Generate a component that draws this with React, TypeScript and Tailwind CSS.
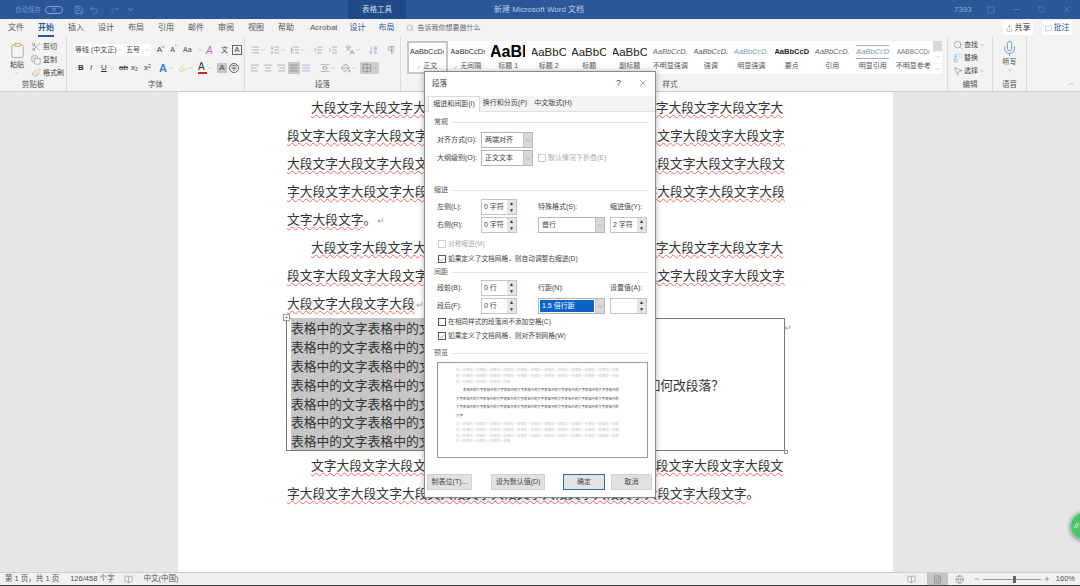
import React from "react";
import {
  Scissors, Copy, Paintbrush, Clipboard, List, ListOrdered, ListTree, Indent, Outdent,
  AlignLeft, AlignCenter, AlignRight, AlignJustify, AlignVerticalSpaceAround, ArrowDownAZ, Pilcrow, Search, Replace,
  MousePointer2, Mic, Share, MessageSquare, ChevronDown, ChevronUp, Minus, Square, X, Save, Undo2, Redo2,
  Highlighter, PaintBucket, Grid2x2, Check, BookOpen, FileText, Globe, Plus, Languages,
} from "lucide-react";

const P = "大段文字";
const pat = (start: number, n: number) => {
  let s = "";
  for (let i = 0; i < n; i++) s += P[(start + i) % 4];
  return s;
};
const Mark = () => <span className="text-[9px] text-gray-400 ml-[1px]">↵</span>;
const Wavy = ({ children }: { children: React.ReactNode }) => (
  <span className="underline decoration-wavy decoration-red-400 decoration-1 underline-offset-2">{children}</span>
);
const Line = ({ children, indent }: { children: React.ReactNode; indent?: boolean }) => (
  <div className={`h-[28px] leading-[28px] whitespace-nowrap ${indent ? "pl-[24px]" : ""}`}>{children}</div>
);

const tabs: string[] = ["文件", "开始", "插入", "设计", "布局", "引用", "邮件", "审阅", "视图", "帮助"];

const styles: [string, string, string][] = [
  ["AaBbCcDı", "⸝ 正文", "text-[7.5px] text-[#333]"],
  ["AaBbCcDı", "⸝ 无间隔", "text-[7.5px] text-[#333]"],
  ["AaBl", "标题 1", "text-[16px] font-bold text-black"],
  ["AaBbC", "标题 2", "text-[11.5px] text-[#222]"],
  ["AaBbC", "标题", "text-[11.5px] text-[#222]"],
  ["AaBbC", "副标题", "text-[11.5px] font-medium text-[#222]"],
  ["AaBbCcD.", "不明显强调", "text-[7.5px] italic text-[#666]"],
  ["AaBbCcD.", "强调", "text-[7.5px] italic text-[#555]"],
  ["AaBbCcD.", "明显强调", "text-[7.5px] italic text-[#7d9bb5]"],
  ["AaBbCcD", "要点", "text-[7.5px] font-bold text-[#222]"],
  ["AaBbCcD.", "引用", "text-[7.5px] italic text-[#666]"],
  ["AaBbCcD", "明显引用", "text-[7.5px] italic text-[#7d9bb5] border-y border-[#9db4c8]"],
  ["AABBCCDı", "不明显参考", "text-[6.5px] text-[#777]"],
];

const G = ({ w, label, children, labelClass }: { w: string; label: string; children: React.ReactNode; labelClass?: string }) => (
  <div className={`${w} h-full flex flex-col border-r border-[#dcdcdc] shrink-0`}>
    <div className="h-[42px] overflow-hidden">{children}</div>
    <div className={`h-[12px] leading-[12px] text-[7.5px] text-[#555] text-center ${labelClass ?? ""}`}>{label}</div>
  </div>
);

const Ic = { size: 10, strokeWidth: 1, className: "text-[#555] shrink-0" };
const Dn = () => <ChevronDown size={6} strokeWidth={1.2} className="text-[#666] shrink-0" />;

const Sel = ({ w, text, hl }: { w: string; text: string; hl?: boolean }) => (
  <div className={`${w} h-[16px] flex border border-[#b5b5b5] bg-white shrink-0`}>
    <div className="flex-1 p-[1px] min-w-0">
      <div className={`h-full pl-[2px] leading-[12px] whitespace-nowrap ${hl ? "bg-[#0a64c8] text-white" : ""}`}>{text}</div>
    </div>
    <div className="w-[9px] bg-[#d8d8d8] flex items-center justify-center border-l border-[#c4c4c4]">
      <ChevronDown size={7} strokeWidth={1.2} className="text-[#555]" />
    </div>
  </div>
);
const Spin = ({ w, text }: { w: string; text: string }) => (
  <div className={`${w} h-[16px] flex border border-[#c4c4c4] bg-white shrink-0`}>
    <div className="flex-1 pl-[2px] leading-[13px] whitespace-nowrap">{text}</div>
    <div className="w-[9px] flex flex-col gap-[1px] bg-[#e4e4e4] text-[#333]">
      <div className="flex-1 flex items-center justify-center text-[5px] leading-none">▲</div>
      <div className="flex-1 flex items-center justify-center text-[5px] leading-none">▼</div>
    </div>
  </div>
);
const Heading = ({ t, cls }: { t: string; cls: string }) => (
  <div className={`${cls} flex items-center gap-[4px] pl-[9px] pr-[7px] h-[14px]`}>
    <span className="shrink-0 text-[#555]">{t}</span>
    <div className="flex-1 h-px bg-[#e2e2e2]" />
  </div>
);
const Cb = ({ checked, disabled, text, cls }: { checked?: boolean; disabled?: boolean; text: string; cls: string }) => (
  <div className={`${cls} h-[14px] pl-[13px] flex items-center gap-[2px] text-[6.7px] ${disabled ? "text-[#aaa]" : ""}`}>
    <div className={`w-[8px] h-[8px] border flex items-center justify-center bg-white ${disabled ? "border-[#ccc]" : "border-[#555]"}`}>
      {checked && <Check size={7} strokeWidth={1.4} className="text-[#333]" />}
    </div>
    <span className="whitespace-nowrap">{text}</span>
  </div>
);
const Btn = ({ w, text, primary, cls }: { w: string; text: string; primary?: boolean; cls?: string }) => (
  <div className={`${w} h-[16px] leading-[14px] text-center whitespace-nowrap border ${primary ? "border-[#2a6ea8] border-[1.5px] bg-[#e4e4e4]" : "border-[#d0d0d0] bg-[#e1e1e1]"} ${cls ?? ""}`}>{text}</div>
);
const Lab = ({ w, t }: { w: string; t: string }) => <span className={`${w} shrink-0 whitespace-nowrap`}>{t}</span>;
const repeat = (s: string, n: number) => Array(n).fill(s).join("");

export default function App() {
  return (
    <div className="relative w-[1080px] h-[586px] overflow-hidden flex flex-col bg-[#e6e6e6] text-[8px] text-[#444]" style={{ fontFamily: '"Liberation Sans", "Noto Sans CJK SC", sans-serif' }}>
      {/* title bar */}
      <div className="h-[19px] shrink-0 bg-[#2b579a] flex items-center text-[#6f94c6] relative">
        <span className="ml-[15px] w-[26px] whitespace-nowrap text-[6.5px]">自动保存</span>
        <div className="ml-[4px] w-[18px] h-[8px] rounded-full border border-[#7fa2d0] flex items-center justify-center text-[5px]">关</div>
        <Save size={10} strokeWidth={1} className="ml-[11px] text-[#a8c0e0]" />
        <Undo2 size={10} strokeWidth={1} className="ml-[5px] text-[#a8c0e0]" />
        <Dn />
        <Redo2 size={10} strokeWidth={1} className="ml-[5px] text-[#6f92c2]" />
        <ChevronDown size={7} className="ml-[7px] text-[#a8c0e0]" />
        <div className="ml-[214px] w-[58px] h-full bg-[#1f4a86] text-[#cfdcef] flex items-center justify-center text-[7.5px]">表格工具</div>
        <div className="ml-[88px] text-[#b9cce6] whitespace-nowrap">新建 Microsoft Word 文档</div>
        <div className="ml-auto flex items-center text-[#8fb0da]">
          <span className="w-[24px]">7393</span>
          <Square size={8} strokeWidth={1} className="ml-[9px]" />
          <Minus size={9} strokeWidth={1} className="ml-[17px]" />
          <Square size={7} strokeWidth={1} className="ml-[17px]" />
          <X size={9} strokeWidth={1} className="ml-[17px] mr-[9px]" />
        </div>
      </div>
      {/* tabs */}
      <div className="h-[18px] shrink-0 bg-[#f3f3f3] flex items-center relative">
        <div className="flex pl-[8px] gap-[14px]">
          {tabs.map((t, i) => (
            <div key={i} className={`relative w-[16px] whitespace-nowrap ${i === 1 ? "font-bold text-[#2b579a]" : "text-[#555]"}`}>
              {t}
              {i === 1 && <div className="absolute left-0 right-0 top-[13px] h-[1.5px] bg-[#2b579a]" />}
            </div>
          ))}
        </div>
        <span className="ml-[16px] text-[#555]">Acrobat</span>
        <span className="ml-[12px] text-[#2b579a]">设计</span>
        <span className="ml-[13px] text-[#2b579a]">布局</span>
        <Search size={8} strokeWidth={1} className="ml-[11px] text-[#555]" />
        <span className="ml-[4px] text-[#666] whitespace-nowrap text-[7px]">告诉我你想要做什么</span>
        <div className="ml-auto flex items-center gap-[9px] mr-[8px]">
          <div className="w-[30px] h-[14px] bg-white flex items-center justify-center gap-[2px] text-[#333]"><Share size={7} strokeWidth={1} />共享</div>
          <div className="w-[30px] h-[14px] bg-white flex items-center justify-center gap-[2px] text-[#2b579a]"><MessageSquare size={7} strokeWidth={1} />批注</div>
        </div>
      </div>
      {/* ribbon */}
      <div className="h-[55px] shrink-0 bg-[#f3f3f3] flex border-b border-[#cfcfcf] relative">
        <G w="w-[67px]" label="剪贴板">
          <div className="flex pl-[9px] pt-[5px] text-[7px]">
            <div className="w-[16px] flex flex-col items-center">
              <Clipboard size={17} strokeWidth={1} className="text-[#b58a4a]" />
              <span className="mt-[1px] whitespace-nowrap leading-[10px]">粘贴</span>
              <Dn />
            </div>
            <div className="ml-[6px] flex flex-col gap-[3px] leading-[10px] whitespace-nowrap">
              <div className="flex items-center gap-[2px]"><Scissors {...Ic} />剪切</div>
              <div className="flex items-center gap-[2px]"><Copy {...Ic} />复制</div>
              <div className="flex items-center gap-[2px]"><Paintbrush size={10} strokeWidth={1} className="text-[#b58a4a]" />格式刷</div>
            </div>
          </div>
        </G>
        <G w="w-[178px]" label="字体">
          <div className="pl-[7px] pt-[7px] flex flex-col gap-[6px]">
            <div className="flex items-center h-[12px] text-[7px]">
              <div className="w-[50px] h-[12px] bg-white flex items-center pl-[1px] whitespace-nowrap">等线 (中文正)<Dn /></div>
              <div className="ml-[1px] w-[26px] h-[12px] bg-white flex items-center justify-between px-[1px]">五号<Dn /></div>
              <span className="ml-[3px] text-[8px] w-[13px] text-center">A<sup className="text-[5px]">^</sup></span>
              <span className="text-[7px] w-[13px] text-center">A<sup className="text-[5px]">ˇ</sup></span>
              <span className="ml-[3px] w-[14px]">Aa</span><Dn />
              <span className="ml-[3px] text-[10px] text-[#b06fc0] italic w-[12px]">A</span>
              <span className="ml-[3px] w-[10px]">文</span>
              <span className="ml-[1px] w-[10px] h-[10px] border border-[#666] leading-[8px] text-center text-[8px]">A</span>
            </div>
            <div className="flex items-center h-[12px] pl-[4px]">
              <span className="w-[12px] font-bold text-[#333]">B</span>
              <span className="w-[11px] italic text-[#333]">I</span>
              <span className="w-[8px] underline text-[#333]">U</span><Dn />
              <span className="ml-[4px] w-[12px] line-through">ab</span>
              <span className="w-[13px]">x<sub className="text-[5px]">2</sub></span>
              <span className="w-[12px]">x<sup className="text-[5px]">2</sup></span>
              <span className="ml-[3px] w-[9px] text-[11px] font-bold text-[#3f7fc8]">A</span><Dn />
              <Highlighter size={10} strokeWidth={1} className="ml-[4px] text-[#c9b200]" /><Dn />
              <span className="ml-[4px] w-[9px] text-[10px] font-medium border-b-2 border-[#c8272d] leading-[10px] text-[#333]">A</span><Dn />
              <span className="ml-[4px] w-[10px] h-[10px] bg-[#c4c4c4] text-center leading-[10px]">A</span>
              <span className="ml-[2px] w-[10px] h-[10px] rounded-full border border-[#666] text-center leading-[8px] text-[6px]">字</span>
            </div>
          </div>
        </G>
        <G w="w-[156px]" label="段落">
          <div className="pl-[5px] pt-[7px] flex flex-col gap-[6px]">
            <div className="flex items-center h-[12px]">
              <List {...Ic} /><Dn /><ListOrdered {...Ic} className="ml-[4px] text-[#555]" /><Dn /><ListTree {...Ic} className="ml-[4px] text-[#555]" /><Dn />
              <Outdent {...Ic} className="ml-[7px] text-[#555]" /><Indent {...Ic} className="ml-[5px] text-[#555]" />
              <Languages {...Ic} className="ml-[7px] text-[#555]" /><Dn />
              <ArrowDownAZ {...Ic} className="ml-[7px] text-[#3f6fb0]" />
              <Pilcrow {...Ic} className="ml-[8px] text-[#555]" />
            </div>
            <div className="flex items-center h-[12px]">
              <AlignLeft {...Ic} /><AlignCenter {...Ic} className="ml-[3px] text-[#555]" /><AlignRight {...Ic} className="ml-[3px] text-[#555]" />
              <div className="ml-[2px] w-[12px] h-[12px] bg-[#c8c8c8] flex items-center justify-center"><AlignJustify {...Ic} /></div>
              <AlignJustify {...Ic} className="ml-[1px] text-[#3f6fb0]" />
              <AlignVerticalSpaceAround {...Ic} className="ml-[9px] text-[#555]" /><Dn />
              <PaintBucket {...Ic} className="ml-[5px] text-[#555]" /><Dn />
              <div className="ml-[3px] w-[19px] h-[12px] bg-[#cfcfcf] flex items-center justify-center"><Grid2x2 {...Ic} /><Dn /></div>
            </div>
          </div>
        </G>
        <G w="w-[547px]" label="样式" labelClass="pr-[8px]">
          <div className="pl-[6px] pt-[4px] flex">
            <div className="w-[526px] h-[33px] bg-white flex overflow-hidden">
              {styles.map(([s, l, c], i) => (
                <div key={i} className={`w-[40.5px] shrink-0 h-full flex flex-col items-center overflow-hidden ${i === 0 ? "border-2 border-[#c6c6c6]" : "pt-[2px]"}`}>
                  <div className="h-[18px] w-[34px] flex items-center justify-center whitespace-nowrap overflow-hidden">
                    <span className={`leading-[12px] ${c}`}>{s}</span>
                  </div>
                  <div className="text-[7px] leading-[10px] whitespace-nowrap text-[#555]">{l}</div>
                </div>
              ))}
            </div>
            <div className="w-[9px] h-[33px] flex flex-col gap-px">
              <div className="flex-1 bg-[#d8d8d8]" />
              <div className="flex-1 bg-white flex items-center justify-center"><Dn /></div>
              <div className="flex-1 bg-white flex items-center justify-center"><Dn /></div>
            </div>
          </div>
        </G>
        <G w="w-[45px]" label="编辑">
          <div className="pl-[5px] pt-[3px] flex flex-col gap-[3px] leading-[10px] whitespace-nowrap text-[7px]">
            <div className="flex items-center gap-[1px]"><Search {...Ic} />查找<Dn /></div>
            <div className="flex items-center gap-[1px]"><Replace size={10} strokeWidth={1} className="text-[#3f7fc8]" />替换</div>
            <div className="flex items-center gap-[1px]"><MousePointer2 {...Ic} />选择<Dn /></div>
          </div>
        </G>
        <G w="w-[34px]" label="语音">
          <div className="flex flex-col items-center pt-[3px] text-[7px]">
            <Mic size={17} strokeWidth={1.2} className="text-[#5b8fd0]" />
            <span className="leading-[10px]">听写</span>
            <Dn />
          </div>
        </G>
        <ChevronUp size={8} strokeWidth={1} className="absolute right-[5px] bottom-[3px] text-[#666]" />
      </div>
      {/* document */}
      <div className="flex-1 min-h-0 pl-[178px] overflow-hidden">
        <div className="w-[715px] h-full bg-white pl-[109px] pt-px text-[12.77px] text-[#333] overflow-hidden" style={{ fontFamily: '"Noto Sans CJK SC", sans-serif' }}>
          <Line indent><Wavy>{pat(0, 37)}</Wavy></Line>
          <Line><Wavy>{pat(1, 39)}</Wavy></Line>
          <Line><Wavy>{pat(0, 39)}</Wavy></Line>
          <Line><Wavy>{pat(3, 39)}</Wavy></Line>
          <Line><Wavy>{pat(2, 6)}</Wavy>。<Mark /></Line>
          <Line indent><Wavy>{pat(0, 37)}</Wavy></Line>
          <Line><Wavy>{pat(1, 39)}</Wavy></Line>
          <Line><Wavy>{pat(0, 10)}</Wavy><Mark /></Line>
          <div className="relative w-[499px] h-[133px] mt-[1px] -ml-px border border-[#777] pl-[4px]">
            {Array.from({ length: 7 }).map((_, i) => (
              <div key={i} className="h-[18.9px] leading-[18.9px] whitespace-nowrap">
                <span className="bg-[#c6c6c6]">{repeat("表格中的文字", 2).slice(0, 11)}</span>
                {i === 3 && <span className="ml-[216px]">如何改段落？</span>}
              </div>
            ))}
            <div className="absolute -left-[4px] -top-[5px] w-[7px] h-[7px] border border-[#999] bg-white text-[6px] leading-[5px] text-center text-[#555]">+</div>
            <div className="absolute -right-[4px] -bottom-[4px] w-[4px] h-[4px] border border-[#999] bg-white" />
            <span className="absolute -right-[8px] top-[2px] text-[9px] text-gray-400">↵</span>
          </div>
          <Line indent><Wavy>{pat(2, 37)}</Wavy></Line>
          <Line><Wavy>{pat(3, 12) + pat(0, 24)}</Wavy>。</Line>
        </div>
      </div>
      {/* status */}
      <div className="h-[13px] shrink-0 bg-[#f0f0f0] border-t border-[#d0d0d0] flex items-center text-[#555] text-[7.5px]">
        <span className="ml-[5px] whitespace-nowrap">第 1 页，共 1 页</span>
        <span className="ml-[11px] whitespace-nowrap">126/458 个字</span>
        <BookOpen size={9} strokeWidth={1} className="ml-[10px]" />
        <span className="ml-[10px] whitespace-nowrap">中文(中国)</span>
        <div className="ml-auto flex items-center h-full">
          <BookOpen size={9} strokeWidth={1} />
          <div className="ml-[11px] w-[21px] h-full bg-[#c4c4c4] flex items-center justify-center"><FileText size={9} strokeWidth={1} /></div>
          <Globe size={9} strokeWidth={1} className="ml-[7px]" />
          <Minus size={6} className="ml-[10px]" />
          <div className="ml-[3px] w-[58px] h-px bg-[#999] relative">
            <div className="absolute left-[30px] -top-[3px] w-[3px] h-[7px] bg-[#666]" />
          </div>
          <Plus size={6} className="ml-[3px]" />
          <span className="ml-[6px] mr-[5px]">160%</span>
        </div>
      </div>
      <div className="h-[1px] shrink-0 bg-[#444]" />
      {/* dialog */}
      <div className="absolute left-[424px] top-[71px] w-[232px] h-[427px] bg-white border border-[#8a8a8a] shadow-[0_0_6px_rgba(0,0,0,0.3)] text-[7px] text-[#444] flex flex-col">
        <div className="h-[24px] shrink-0 flex items-center pl-[7px] relative text-[7.5px]">
          段落
          <span className="absolute left-[191px] top-[5px] text-[9px]">?</span>
          <X size={10} strokeWidth={1} className="absolute left-[213px] top-[6px] text-[#333]" />
        </div>
        <div className="h-[16px] shrink-0 bg-[#f4f4f4] flex pl-[3px] border-b border-[#e0e0e0]">
          <div className="w-[52px] h-[16px] bg-white border-x border-t border-[#dcdcdc] text-center leading-[14px] whitespace-nowrap">缩进和间距(I)</div>
          <div className="ml-[1px] w-[48px] text-center leading-[14px] whitespace-nowrap">换行和分页(P)</div>
          <div className="ml-[4px] w-[40px] text-center leading-[14px] whitespace-nowrap">中文版式(H)</div>
        </div>
        <Heading t="常规" cls="mt-[3px]" />
        <div className="mt-[3px] pl-[12px] h-[16px] flex items-center">
          <Lab w="w-[44px]" t="对齐方式(G):" /><Sel w="w-[52px]" text="两端对齐" />
        </div>
        <div className="mt-[2px] pl-[12px] h-[16px] flex items-center">
          <Lab w="w-[44px]" t="大纲级别(O):" /><Sel w="w-[52px]" text="正文文本" />
          <div className="ml-[5px] w-[8px] h-[8px] border border-[#ccc]" />
          <span className="ml-[2px] text-[#aaa] whitespace-nowrap">默认情况下折叠(E)</span>
        </div>
        <Heading t="缩进" cls="mt-[17px]" />
        <div className="mt-[2px] pl-[12px] h-[16px] flex items-center">
          <Lab w="w-[44px]" t="左侧(L):" /><Spin w="w-[36px]" text="0 字符" />
          <Lab w="ml-[21px] w-[72px]" t="特殊格式(S):" /><Lab w="" t="缩进值(Y):" />
        </div>
        <div className="mt-[2px] pl-[12px] h-[16px] flex items-center">
          <Lab w="w-[44px]" t="右侧(R):" /><Spin w="w-[36px]" text="0 字符" />
          <div className="ml-[21px]"><Sel w="w-[67px]" text="首行" /></div>
          <div className="ml-[5px]"><Spin w="w-[37px]" text="2 字符" /></div>
        </div>
        <Cb disabled text="对称缩进(M)" cls="mt-[4px]" />
        <Cb checked text="如果定义了文档网格，则自动调整右缩进(D)" cls="mt-px" />
        <Heading t="间距" cls="-mt-px" />
        <div className="mt-px pl-[12px] h-[16px] flex items-center">
          <Lab w="w-[44px]" t="段前(B):" /><Spin w="w-[36px]" text="0 行" />
          <Lab w="ml-[21px] w-[72px]" t="行距(N):" /><Lab w="" t="设置值(A):" />
        </div>
        <div className="mt-[2px] pl-[12px] h-[16px] flex items-center">
          <Lab w="w-[44px]" t="段后(F):" /><Spin w="w-[36px]" text="0 行" />
          <div className="ml-[21px]"><Sel w="w-[67px]" text="1.5 倍行距" hl /></div>
          <div className="ml-[5px]"><Spin w="w-[37px]" text="" /></div>
        </div>
        <Cb text="在相同样式的段落间不添加空格(C)" cls="mt-px" />
        <Cb checked text="如果定义了文档网格，则对齐到网格(W)" cls="" />
        <Heading t="预览" cls="mt-[3px]" />
        <div className="mt-[2px] ml-[12px] mr-[7px] h-[96px] border border-[#9a9a9a] bg-white pl-[18px] pr-[28px] pt-[4px] overflow-hidden text-[3.4px] break-all">
          <div className="leading-[6px] text-[#c8c8c8]">{repeat("前一段落", 28)}</div>
          <div className="mt-[1px] leading-[8.6px] text-[#444] indent-[7px]">{repeat("表格中的文字", 26).slice(0, 144)}</div>
          <div className="leading-[5.7px] text-[#c8c8c8] mt-[2px]">{repeat("后一段落", 40)}</div>
        </div>
        <div className="mt-[16px] pl-[2px] flex h-[16px]">
          <Btn w="w-[45px]" text="制表位(T)..." />
          <Btn w="w-[54px]" cls="ml-[19px]" text="设为默认值(D)" />
          <Btn w="w-[42px]" cls="ml-[18px]" primary text="确定" />
          <Btn w="w-[41px]" cls="ml-[6px]" text="取消" />
        </div>
      </div>
      {/* floating ball */}
      <div className="absolute left-[1070px] top-[512px] w-[28px] h-[28px] rounded-full bg-[#4cc26a] border border-[#8fdca3] shadow-[0_1px_4px_rgba(0,0,0,0.45)] pl-[3px] leading-[26px] text-white text-[8px] italic">//</div>
    </div>
  );
}
